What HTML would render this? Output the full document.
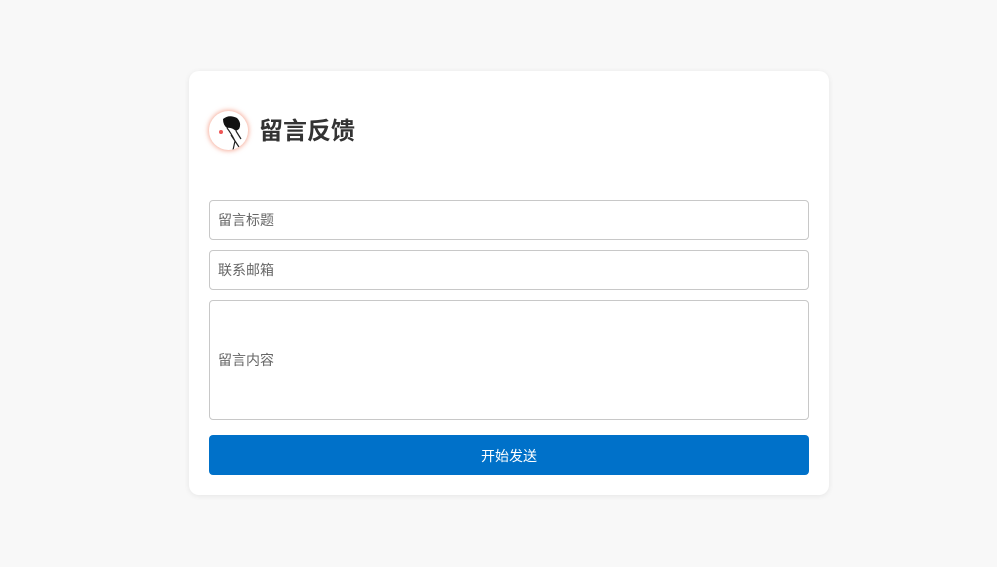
<!DOCTYPE html>
<html><head><meta charset="utf-8"><style>
html,body{margin:0;padding:0;background:#f8f8f8;width:997px;height:567px;overflow:hidden;font-family:"Liberation Sans","Noto Sans CJK SC",sans-serif;}
.card{position:absolute;left:189px;top:71px;width:640px;height:424px;background:#fff;border-radius:10px;box-shadow:0 1px 6px rgba(0,0,0,0.08);}
.av{position:absolute;left:20px;top:40px;width:39px;height:39px;border-radius:50%;background:#fff;box-shadow:0 0 5px 1px rgba(240,120,90,0.6);overflow:hidden;}
h1{position:absolute;left:70px;top:45px;margin:0;font-size:24px;font-weight:bold;color:#333;line-height:32px;}
.in{position:absolute;left:20px;border:1px solid #c8c8c8;border-radius:4px;font-size:14px;color:#666;padding-left:8px;box-sizing:border-box;width:600px;}
.btn{position:absolute;left:20px;top:364px;width:600px;height:40px;background:#0071c9;border-radius:4px;color:#fff;font-size:14px;text-align:center;line-height:42px;}
</style></head><body>
<div class="card">
<div class="av"><svg width="39" height="39" viewBox="0 0 39 39"><path d="M14 8 Q20 3 28 7 Q33 12 30 18 L27 20 Q22 16 18 17 Q14 14 14 8Z" fill="#111"/><path d="M18 17 Q22 22 26 30 L24 39 M22 24 L30 36 M27 20 L32 28" stroke="#222" stroke-width="1.2" fill="none"/><circle cx="12" cy="21" r="2" fill="#e55"/></svg></div>
<h1>留言反馈</h1>
<div class="in" style="top:129px;height:40px;line-height:38px;">留言标题</div>
<div class="in" style="top:179px;height:40px;line-height:38px;">联系邮箱</div>
<div class="in" style="top:229px;height:120px;line-height:118px;">留言内容</div>
<div class="btn">开始发送</div>
</div>
</body></html>
